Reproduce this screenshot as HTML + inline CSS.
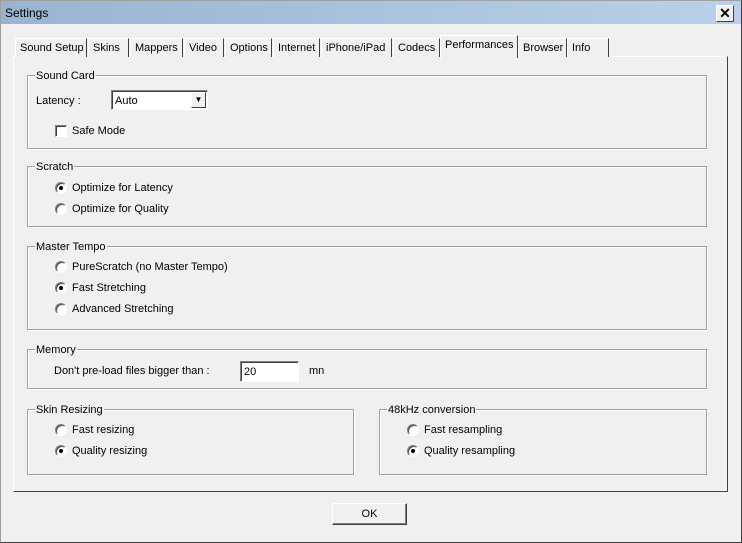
<!DOCTYPE html>
<html><head><style>
*{margin:0;padding:0;box-sizing:border-box}
body{width:742px;height:543px;background:#f0f0f0;font-family:"Liberation Sans",sans-serif;font-size:11px;color:#000;position:relative;overflow:hidden}
.a{position:absolute}
.win{left:0;top:0;width:742px;height:543px;border:1px solid #a0a0a0;border-right-color:#404040;border-bottom-color:#404040}
.title{left:1px;top:1px;width:740px;height:23px;background:linear-gradient(90deg,#99b4d1,#b9d1ea);font-size:12px;line-height:25px;padding-left:4px}
.x{left:716px;top:5px;width:18px;height:17px;background:#f0f0f0;border:1px solid;border-color:#fff #404040 #404040 #fff;font-weight:bold;font-size:14px;text-align:center;line-height:15px}
.tab{top:38px;height:19px;border:1px solid;border-color:#fff #404040 transparent #fff;border-bottom:none;line-height:18px;padding-left:4px;background:#f0f0f0;white-space:nowrap}
.panel{left:13px;top:56px;width:715px;height:436px;border:1px solid;border-color:#fff #404040 #404040 #fff}
.g{border:1px solid #a0a0a0;box-shadow:1px 1px 0 #fff inset,1px 1px 0 #fff}
.lg{background:#f0f0f0;padding:0 1px;line-height:14px}
.rb{width:12px;height:12px;border-radius:50%;background:#fff;border:1px solid;border-color:#808080 #fff #fff #808080;box-shadow:inset 1px 1px 0 #404040}
.rb.on::after{content:"";position:absolute;left:3px;top:3px;width:4px;height:4px;border-radius:50%;background:#000}
.t{line-height:15px}
</style></head><body>
<div class="a win"></div>
<div class="a title">Settings</div>
<div class="a x">✕</div>

<div class="a panel"></div>
<div class="a tab" style="left:15px;width:72px">Sound Setup</div>
<div class="a tab" style="left:88px;width:41px">Skins</div>
<div class="a tab" style="left:130px;width:53px">Mappers</div>
<div class="a tab" style="left:184px;width:40px">Video</div>
<div class="a tab" style="left:225px;width:47px">Options</div>
<div class="a tab" style="left:273px;width:47px">Internet</div>
<div class="a tab" style="left:321px;width:71px">iPhone/iPad</div>
<div class="a tab" style="left:393px;width:47px">Codecs</div>
<div class="a tab" style="left:440px;top:35px;width:78px;height:23px;line-height:18px">Performances</div>
<div class="a tab" style="left:518px;width:49px">Browser</div>
<div class="a tab" style="left:567px;width:42px">Info</div>

<div class="a g" style="left:27px;top:75px;width:680px;height:74px"></div>
<div class="a lg" style="left:35px;top:69px">Sound Card</div>
<div class="a t" style="left:36px;top:94px">Latency :</div>
<div class="a" style="left:111px;top:90px;width:97px;height:20px;background:#fff;border:1px solid;border-color:#808080 #fff #fff #808080;box-shadow:inset 1px 1px 0 #404040;padding:4px 3px;line-height:12px">Auto</div>
<div class="a" style="left:191px;top:92px;width:15px;height:16px;background:#f0f0f0;border:1px solid;border-color:#fff #404040 #404040 #fff;font-size:8px;text-align:center;line-height:14px">▼</div>
<div class="a" style="left:55px;top:125px;width:12px;height:12px;background:#fff;border:1px solid;border-color:#808080 #fff #fff #808080;box-shadow:inset 1px 1px 0 #404040"></div>
<div class="a t" style="left:72px;top:124px">Safe Mode</div>

<div class="a g" style="left:27px;top:166px;width:680px;height:61px"></div>
<div class="a lg" style="left:35px;top:160px">Scratch</div>
<div class="a rb on" style="left:55px;top:182px"></div><div class="a t" style="left:72px;top:181px">Optimize for Latency</div>
<div class="a rb" style="left:55px;top:203px"></div><div class="a t" style="left:72px;top:202px">Optimize for Quality</div>

<div class="a g" style="left:27px;top:246px;width:680px;height:84px"></div>
<div class="a lg" style="left:35px;top:240px">Master Tempo</div>
<div class="a rb" style="left:55px;top:261px"></div><div class="a t" style="left:72px;top:260px">PureScratch (no Master Tempo)</div>
<div class="a rb on" style="left:55px;top:282px"></div><div class="a t" style="left:72px;top:281px">Fast Stretching</div>
<div class="a rb" style="left:55px;top:303px"></div><div class="a t" style="left:72px;top:302px">Advanced Stretching</div>

<div class="a g" style="left:27px;top:349px;width:680px;height:40px"></div>
<div class="a lg" style="left:35px;top:343px">Memory</div>
<div class="a t" style="left:54px;top:364px">Don't pre-load files bigger than :</div>
<div class="a" style="left:240px;top:361px;width:59px;height:21px;background:#fff;border:1px solid;border-color:#808080 #fff #fff #808080;box-shadow:inset 1px 1px 0 #404040;padding:4px 3px;line-height:13px">20</div>
<div class="a t" style="left:309px;top:364px">mn</div>

<div class="a g" style="left:27px;top:409px;width:327px;height:66px"></div>
<div class="a lg" style="left:35px;top:403px">Skin Resizing</div>
<div class="a rb" style="left:55px;top:424px"></div><div class="a t" style="left:72px;top:423px">Fast resizing</div>
<div class="a rb on" style="left:55px;top:445px"></div><div class="a t" style="left:72px;top:444px">Quality resizing</div>

<div class="a g" style="left:379px;top:409px;width:328px;height:66px"></div>
<div class="a lg" style="left:387px;top:403px">48kHz conversion</div>
<div class="a rb" style="left:407px;top:424px"></div><div class="a t" style="left:424px;top:423px">Fast resampling</div>
<div class="a rb on" style="left:407px;top:445px"></div><div class="a t" style="left:424px;top:444px">Quality resampling</div>

<div class="a" style="left:332px;top:503px;width:75px;height:22px;border:1px solid;border-color:#fff #404040 #404040 #fff;box-shadow:inset -1px -1px 0 #808080;text-align:center;line-height:20px">OK</div>
</body></html>
